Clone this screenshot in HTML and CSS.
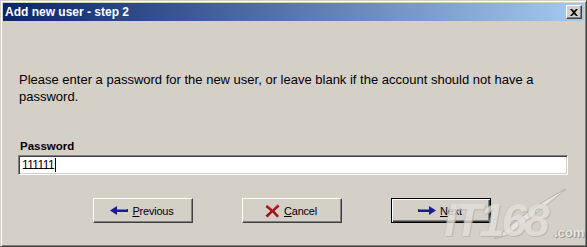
FILE: index.html
```html
<!DOCTYPE html>
<html>
<head>
<meta charset="utf-8">
<link rel="stylesheet" href="styles.css">
</head>
<body>
<div class="window">
  <div class="titlebar">
    <span class="title">Add new user - step 2</span>
    <span class="close"><svg width="8" height="7" viewBox="0 0 8 7"><path d="M0 0h2l2 2 2-2h2L5 3.5 8 7H6L4 5 2 7H0l3-3.5z" fill="#000"/></svg></span>
  </div>
  <div class="content">
    <p class="intro">Please enter a password for the new user, or leave blank if the account should not have a password.</p>
    <label class="label">Password</label>
    <div class="input"><span class="value">111111</span><span class="caret"></span></div>
    <div class="buttons">
      <button class="btn"><svg class="ico" width="18" height="9" viewBox="0 0 18 9"><path d="M0 4.5 7 0v3h11v3H7v3z" fill="#1a1a9e"/><path d="M7 3.5h10" stroke="#6a78d8" stroke-width="1"/></svg><span><u>P</u>revious</span></button>
      <button class="btn"><svg class="ico" width="15" height="14" viewBox="0 0 15 14"><path d="M2 1 7.5 5.5 13 0.5 14.5 2.5 9.5 7 14 12 12 13.5 7.5 8.5 2.5 13.5 0.5 11.5 5.5 7 0.5 3z" fill="#a0141a"/><path d="M2 1 7.5 5.5 13 0.5" stroke="#d05058" stroke-width="1" fill="none"/></svg><span><u>C</u>ancel</span></button>
      <button class="btn default"><svg class="ico" width="18" height="9" viewBox="0 0 18 9"><path d="M18 4.5 11 0v3H0v3h11v3z" fill="#1a1a9e"/><path d="M1 3.5h10" stroke="#6a78d8" stroke-width="1"/></svg><span><u>N</u>ext</span></button>
    </div>
  </div>
  <div class="watermark">
    <svg class="swoosh" width="80" height="60" viewBox="0 0 80 60"><path d="M0 56 C20 40 40 22 72 6 C58 18 40 32 14 52 Z" fill="#e6e3de" stroke="#b4b0a8" stroke-width="1"/></svg>
    <span class="wm-main">IT168</span>
  </div>
  <span class="wm-com">.com</span>
</div>
</body>
</html>
```
FILE: styles.css
```css
html, body {
  margin: 0;
  padding: 0;
  background: #d4d0c8;
}
.window {
  position: relative;
  width: 587px;
  height: 247px;
  box-sizing: border-box;
  background: #d4d0c8;
  border: 1px solid;
  border-color: #d4d0c8 #404040 #404040 #d4d0c8;
  box-shadow: inset 1px 1px #ffffff, inset -1px -1px #808080;
  padding: 2px;
  display: flex;
  flex-direction: column;
  overflow: hidden;
  font-family: "Liberation Sans", Arial, sans-serif;
  color: #000;
}
.titlebar {
  height: 18px;
  flex: none;
  background: linear-gradient(to right, #0a246a, #a6caf0);
  display: flex;
  align-items: center;
  justify-content: space-between;
  padding: 0 2px 0 2px;
}
.title {
  color: #fff;
  font-family: "Liberation Sans", Arial, sans-serif;
  font-weight: bold;
  font-size: 12px;
}
.close {
  width: 16px;
  height: 14px;
  box-sizing: border-box;
  background: #d4d0c8;
  border: 1px solid;
  border-color: #ffffff #404040 #404040 #ffffff;
  box-shadow: inset -1px -1px #808080;
  display: flex;
  align-items: center;
  justify-content: center;
}
.content {
  padding: 0 16px 0 15px;
  display: flex;
  flex-direction: column;
}
.intro {
  margin: 50px 0 0 1px;
  font-size: 13px;
  line-height: 17px;
  width: 540px;
}
.label {
  margin: 34px 0 0 2px;
  font-weight: bold;
  font-size: 11.5px;
  line-height: 14px;
}
.input {
  margin-top: 2px;
  height: 20px;
  box-sizing: border-box;
  background: #fff;
  border: 1px solid;
  border-color: #808080 #ffffff #ffffff #808080;
  box-shadow: inset 1px 1px #404040, inset -1px -1px #d4d0c8;
  display: flex;
  align-items: center;
  padding-left: 3px;
  font-size: 12px;
  letter-spacing: -0.6px;
}
.caret {
  display: inline-block;
  width: 1px;
  height: 14px;
  background: #000;
  margin-left: 1px;
}
.buttons {
  margin-top: 23px;
  display: flex;
  justify-content: center;
  gap: 49px;
  padding-right: 2px;
}
.btn {
  width: 100px;
  height: 25px;
  box-sizing: border-box;
  background: #d4d0c8;
  border: 1px solid;
  border-color: #ffffff #404040 #404040 #ffffff;
  box-shadow: inset -1px -1px #808080;
  display: flex;
  align-items: center;
  justify-content: center;
  gap: 4px;
  padding: 0 2px 0 0;
  font-family: "Liberation Sans", Arial, sans-serif;
  font-size: 11px;
  letter-spacing: -0.2px;
  color: #000;
}
.btn.default {
  border-color: #000;
  box-shadow: inset 1px 1px #ffffff, inset -1px -1px #404040, inset -2px -2px #808080;
}
.ico {
  flex: none;
}
.watermark {
  position: absolute;
  left: 443px;
  top: 196px;
  width: 110px;
  height: 50px;
  font-family: "Liberation Sans", Arial, sans-serif;
  font-style: italic;
  font-weight: bold;
  color: #e2dfd9;
  pointer-events: none;
}
.swoosh {
  position: absolute;
  left: 50px;
  top: -14px;
}
.wm-main {
  position: absolute;
  left: 0;
  top: 0;
  font-size: 46px;
  line-height: 46px;
  letter-spacing: -3px;
  text-shadow: 1px 1px 0 #b4b0a8, -1px 0 0 #c4c0b8;
  opacity: 0.8;
}
.wm-com {
  position: absolute;
  left: 553px;
  top: 225px;
  z-index: 2;
  font-family: "Liberation Sans", Arial, sans-serif;
  font-size: 13px;
  line-height: 13px;
  font-weight: bold;
  color: #ebe8e3;
  text-shadow: 1px 1px 0 #9a968e, -1px 0 0 #a8a49c;
  pointer-events: none;
}
```
